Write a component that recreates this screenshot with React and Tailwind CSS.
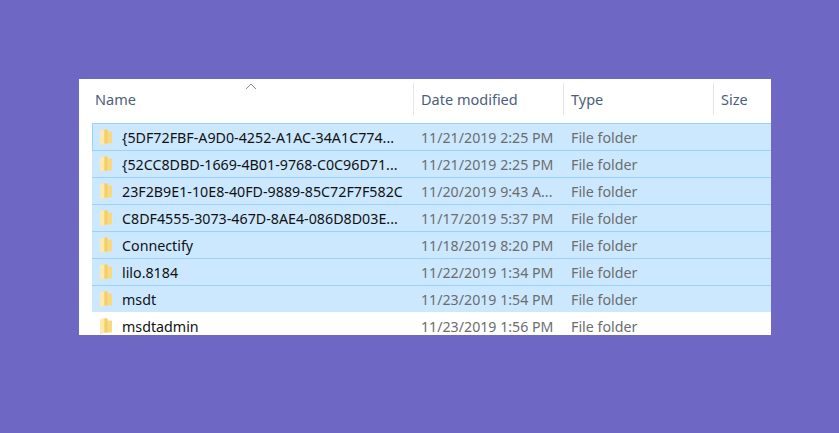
const rows = [
  ["{5DF72FBF-A9D0-4252-A1AC-34A1C774...", "11/21/2019 2:25 PM", true],
  ["{52CC8DBD-1669-4B01-9768-C0C96D71...", "11/21/2019 2:25 PM", true],
  ["23F2B9E1-10E8-40FD-9889-85C72F7F582C", "11/20/2019 9:43 A...", true],
  ["C8DF4555-3073-467D-8AE4-086D8D03E...", "11/17/2019 5:37 PM", true],
  ["Connectify", "11/18/2019 8:20 PM", true],
  ["lilo.8184", "11/22/2019 1:34 PM", true],
  ["msdt", "11/23/2019 1:54 PM", true],
  ["msdtadmin", "11/23/2019 1:56 PM", false],
];

function Folder() {
  return (
    <svg width="14" height="17" viewBox="0 0 14 17" className="shrink-0">
      <path d="M1 1.5 L5.5 0.5 L8.5 0.5 L8.5 2.5 L13 2.5 L13 14.5 L5.5 14.5 L1 16.5 Z" fill="#f9d97f" />
      <path d="M1 1.5 L5.5 0.5 L5.5 14.5 L1 16.5 Z" fill="#fce9ae" />
      <path d="M5.5 0.5 L8.5 0.5 L8.5 14.5 L5.5 14.5 Z" fill="#f5cd6a" />
    </svg>
  );
}

export default function App() {
  return (
    <div className="w-[839px] h-[433px] bg-[#6f67c4] pt-[79px] pl-[79px] font-['Noto_Sans','Open_Sans',sans-serif]">
      <div className="w-[692px] h-[256px] bg-white overflow-hidden">
        <div className="relative flex h-[44px] pt-[4px] text-[14.5px] text-[#4c607a]">
          <svg width="12" height="7" viewBox="0 0 12 7" className="absolute left-[166px] top-[4px]">
            <path d="M1 6 L6 1 L11 6" fill="none" stroke="#8a8a8a" strokeWidth="1" />
          </svg>
          <div className="w-[335px] h-[32px] pl-[16px] pt-[2px] flex items-center border-r border-[#e5e5e5]">Name</div>
          <div className="w-[150px] h-[32px] pl-[7px] pt-[2px] flex items-center border-r border-[#e5e5e5]">Date modified</div>
          <div className="w-[150px] h-[32px] pl-[7px] pt-[2px] flex items-center border-r border-[#e5e5e5]">Type</div>
          <div className="pl-[7px] h-[32px] pt-[2px] flex items-center">Size</div>
        </div>
        <div className="ml-[13px] flex flex-col">
          {rows.map(([name, date, sel], i) => (
            <div
              key={name}
              className={`flex items-center h-[27px] shrink-0 border-t text-[14.25px] ${sel ? "bg-[#cce8ff] border-[#99d1ff]" : "bg-white border-transparent"} ${i === 0 ? "shadow-[inset_1px_0_0_#99d1ff]" : ""}`}
            >
              <div className="w-[30px] pl-[7px] flex items-center"><Folder /></div>
              <div className="w-[299px] pt-[2px] text-[#111] whitespace-nowrap">{name}</div>
              <div className="w-[150px] pt-[2px] text-[14.2px] text-[#6d6d6d] whitespace-nowrap">{date}</div>
              <div className="pt-[2px] text-[#6d6d6d]">File folder</div>
            </div>
          ))}
        </div>
      </div>
    </div>
  );
}
